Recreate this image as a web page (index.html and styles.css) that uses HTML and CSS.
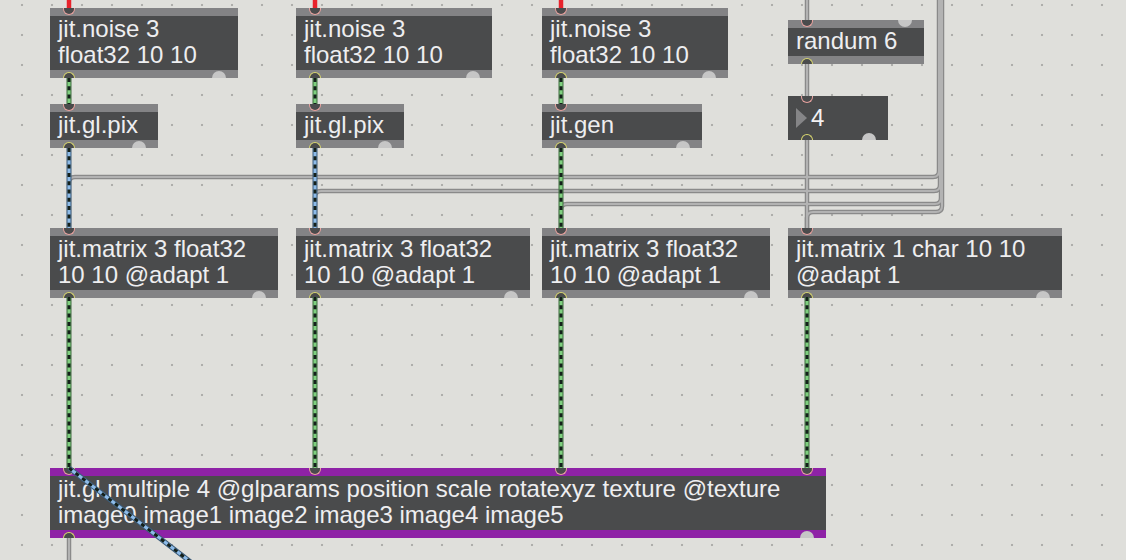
FILE: index.html
```html
<!DOCTYPE html>
<html>
<head>
<meta charset="utf-8">
<title>Max patcher</title>
<link rel="stylesheet" href="styles.css">
</head>
<body>
<div class="patcher">

  <div class="obj noise1">
    <div class="bar"></div>
    <div class="body">jit.noise 3<br>float32 10 10</div>
    <div class="bar"></div>
    <span class="inlet"></span><span class="outlet"></span><span class="knob"></span>
  </div>
  <div class="obj noise2">
    <div class="bar"></div>
    <div class="body">jit.noise 3<br>float32 10 10</div>
    <div class="bar"></div>
    <span class="inlet"></span><span class="outlet"></span><span class="knob"></span>
  </div>
  <div class="obj noise3">
    <div class="bar"></div>
    <div class="body">jit.noise 3<br>float32 10 10</div>
    <div class="bar"></div>
    <span class="inlet"></span><span class="outlet"></span><span class="knob"></span>
  </div>

  <div class="obj randum">
    <div class="bar"></div>
    <div class="body">randum 6</div>
    <div class="bar"></div>
    <span class="inlet"></span><span class="outlet"></span><span class="knob top"></span>
  </div>

  <div class="obj pix1">
    <div class="bar"></div>
    <div class="body">jit.gl.pix</div>
    <div class="bar"></div>
    <span class="inlet"></span><span class="outlet"></span><span class="knob"></span>
  </div>
  <div class="obj pix2">
    <div class="bar"></div>
    <div class="body">jit.gl.pix</div>
    <div class="bar"></div>
    <span class="inlet"></span><span class="outlet"></span><span class="knob"></span>
  </div>
  <div class="obj gen">
    <div class="bar"></div>
    <div class="body">jit.gen</div>
    <div class="bar"></div>
    <span class="inlet"></span><span class="outlet"></span><span class="knob"></span>
  </div>

  <div class="obj numbox">
    <div class="numrow"><span class="tri"></span><span class="numval">4</span></div>
    <span class="inlet"></span><span class="outlet"></span><span class="knob"></span>
  </div>

  <div class="obj mat1">
    <div class="bar"></div>
    <div class="body">jit.matrix 3 float32<br>10 10 @adapt 1</div>
    <div class="bar"></div>
    <span class="inlet"></span><span class="outlet"></span><span class="knob"></span>
  </div>
  <div class="obj mat2">
    <div class="bar"></div>
    <div class="body">jit.matrix 3 float32<br>10 10 @adapt 1</div>
    <div class="bar"></div>
    <span class="inlet"></span><span class="outlet"></span><span class="knob"></span>
  </div>
  <div class="obj mat3">
    <div class="bar"></div>
    <div class="body">jit.matrix 3 float32<br>10 10 @adapt 1</div>
    <div class="bar"></div>
    <span class="inlet"></span><span class="outlet"></span><span class="knob"></span>
  </div>
  <div class="obj mat4">
    <div class="bar"></div>
    <div class="body">jit.matrix 1 char 10 10<br>@adapt 1</div>
    <div class="bar"></div>
    <span class="inlet"></span><span class="outlet"></span><span class="knob"></span>
  </div>

  <div class="obj multi">
    <div class="bar"></div>
    <div class="body">jit.gl.multiple 4 @glparams position scale rotatexyz texture @texture<br>image0 image1 image2 image3 image4 image5</div>
    <div class="bar"></div>
    <span class="inlet"></span><span class="inlet in2"></span><span class="inlet in3"></span><span class="inlet in4"></span>
    <span class="outlet"></span><span class="knob"></span>
  </div>

  <svg class="cables" width="1126" height="560" viewBox="0 0 1126 560">
    <defs>
      <path id="k1" d="M807 0V20"/>
      <path id="k2" d="M807 64V96"/>
      <path id="k3" d="M807 140V228"/>
      <path id="k4" d="M69 538V562"/>
      <path id="k5" d="M939 -2V171Q939 177 933 177H75Q69 177 69 183V228"/>
      <path id="k6" d="M940 -2V185Q940 191 934 191H321Q315 191 315 197V228"/>
      <path id="k7" d="M941 -2V198Q941 204 935 204H567Q561 204 561 210V228"/>
      <path id="k8" d="M942 -2V206Q942 212 936 212H813Q807 212 807 218V228"/>
      <path id="r1" d="M69 -2V8"/>
      <path id="r2" d="M315 -2V8"/>
      <path id="r3" d="M561 -2V8"/>
      <path id="g1" d="M69 78V104"/>
      <path id="g2" d="M315 78V104"/>
      <path id="g3" d="M561 78V104"/>
      <path id="g4" d="M561 148V228"/>
      <path id="g5" d="M69 297V468"/>
      <path id="g6" d="M315 297V468"/>
      <path id="g7" d="M561 297V468"/>
      <path id="g8" d="M807 297V468"/>
      <path id="b1" d="M69 148V228"/>
      <path id="b2" d="M315 148V228"/>
      <path id="b3" d="M69 468L201 570"/>
    </defs>

    <g class="grey-o">
      <use href="#k5"/><use href="#k6"/><use href="#k7"/><use href="#k8"/>
      <use href="#k1"/><use href="#k2"/><use href="#k3"/><use href="#k4"/>
    </g>
    <g class="grey-i">
      <use href="#k5"/><use href="#k6"/><use href="#k7"/><use href="#k8"/>
      <use href="#k1"/><use href="#k2"/><use href="#k3"/><use href="#k4"/>
    </g>

    <g class="red">
      <use href="#r1"/><use href="#r2"/><use href="#r3"/>
    </g>

    <g class="green-o">
      <use href="#g1"/><use href="#g2"/><use href="#g3"/><use href="#g4"/>
      <use href="#g5"/><use href="#g6"/><use href="#g7"/><use href="#g8"/>
    </g>
    <g class="green-i">
      <use href="#g1"/><use href="#g2"/><use href="#g3"/><use href="#g4"/>
      <use href="#g5"/><use href="#g6"/><use href="#g7"/><use href="#g8"/>
    </g>
    <g class="dash">
      <use href="#g1"/><use href="#g2"/><use href="#g3"/><use href="#g4"/>
      <use href="#g5"/><use href="#g6"/><use href="#g7"/><use href="#g8"/>
    </g>

    <g class="blue-o">
      <use href="#b1"/><use href="#b2"/><use href="#b3"/>
    </g>
    <g class="blue-i">
      <use href="#b1"/><use href="#b2"/><use href="#b3"/>
    </g>
    <g class="dash">
      <use href="#b1"/><use href="#b2"/><use href="#b3"/>
    </g>
  </svg>

</div>
</body>
</html>
```

FILE: styles.css
```css
html, body {
  margin: 0;
  padding: 0;
}

body {
  width: 1126px;
  height: 560px;
  overflow: hidden;
  background: #dfdfdb;
}

.patcher {
  position: relative;
  width: 1126px;
  height: 560px;
  overflow: hidden;
  background-color: #dfdfdb;
  background-image: radial-gradient(circle at center, #aeaeab 0, #aeaeab 1px, transparent 1.6px);
  background-size: 30px 30px;
  background-position: 7px -10px;
}

/* ---------- objects ---------- */

.obj {
  position: absolute;
  display: flex;
  flex-direction: column;
  background: #4a4b4c;
}

.bar {
  height: 8px;
  background: #838385;
}

.body {
  padding: 0 8px 2px;
  font-family: "Liberation Sans", Arial, sans-serif;
  font-size: 24px;
  line-height: 26px;
  color: #eeeef0;
  white-space: nowrap;
}

.multi .bar {
  background: #8e22a6;
}

.inlet,
.outlet {
  position: absolute;
  left: 12.5px;
  width: 10px;
  height: 5.5px;
  background: #4a4b4c;
  box-sizing: content-box;
}

.inlet {
  top: 0;
  border: 1.5px solid #e9a3a0;
  border-top: 0;
  border-radius: 0 0 7px 7px;
}

.outlet {
  bottom: 0;
  border: 1.5px solid #d9d770;
  border-bottom: 0;
  border-radius: 7px 7px 0 0;
}

.inlet.in2 { left: 258.5px; }
.inlet.in3 { left: 504.5px; }
.inlet.in4 { left: 750.5px; }

.knob {
  position: absolute;
  right: 12px;
  bottom: 0;
  width: 14px;
  height: 7px;
  border-radius: 7px 7px 0 0;
  background: #c6c6c6;
}

.knob.top {
  top: 0;
  bottom: auto;
  border-radius: 0 0 7px 7px;
}

/* number box */
.numbox {
  height: 44px;
}

.numrow {
  display: flex;
  align-items: center;
  height: 44px;
  padding-left: 8px;
  gap: 4px;
}

.tri {
  width: 0;
  height: 0;
  border-top: 10.5px solid transparent;
  border-bottom: 10.5px solid transparent;
  border-left: 11px solid #858587;
}

.numval {
  font-family: "Liberation Sans", Arial, sans-serif;
  font-size: 24px;
  line-height: 26px;
  color: #f2f2f4;
}

/* positions on the patcher canvas */
.noise1 { left: 50px;  top: 8px;   width: 188px; }
.noise2 { left: 296px; top: 8px;   width: 196px; }
.noise3 { left: 542px; top: 8px;   width: 186px; }
.randum { left: 788px; top: 20px;  width: 136px; }
.pix1   { left: 50px;  top: 104px; width: 108px; }
.pix2   { left: 296px; top: 104px; width: 108px; }
.gen    { left: 542px; top: 104px; width: 160px; }
.numbox { left: 788px; top: 96px;  width: 100px; }
.mat1   { left: 50px;  top: 228px; width: 228px; }
.mat2   { left: 296px; top: 228px; width: 234px; }
.mat3   { left: 542px; top: 228px; width: 228px; }
.mat4   { left: 788px; top: 228px; width: 274px; }
.multi  { left: 50px;  top: 468px; width: 776px; }

/* ---------- cables ---------- */

.cables {
  position: absolute;
  left: 0;
  top: 0;
  pointer-events: none;
  fill: none;
}

.grey-o { stroke: #8a8a8a; stroke-width: 4.5px; }
.grey-i { stroke: #b3b3b3; stroke-width: 2px; }

.red { stroke: #e8232c; stroke-width: 4.5px; }

.green-o { stroke: #3f6d3f; stroke-width: 5px; }
.green-i { stroke: #7fcf7f; stroke-width: 3px; }

.blue-o { stroke: #3a5a78; stroke-width: 5px; }
.blue-i { stroke: #8dbbe8; stroke-width: 3px; }

.dash {
  stroke: #14201a;
  stroke-width: 3px;
  stroke-dasharray: 4 4.3;
}
```
